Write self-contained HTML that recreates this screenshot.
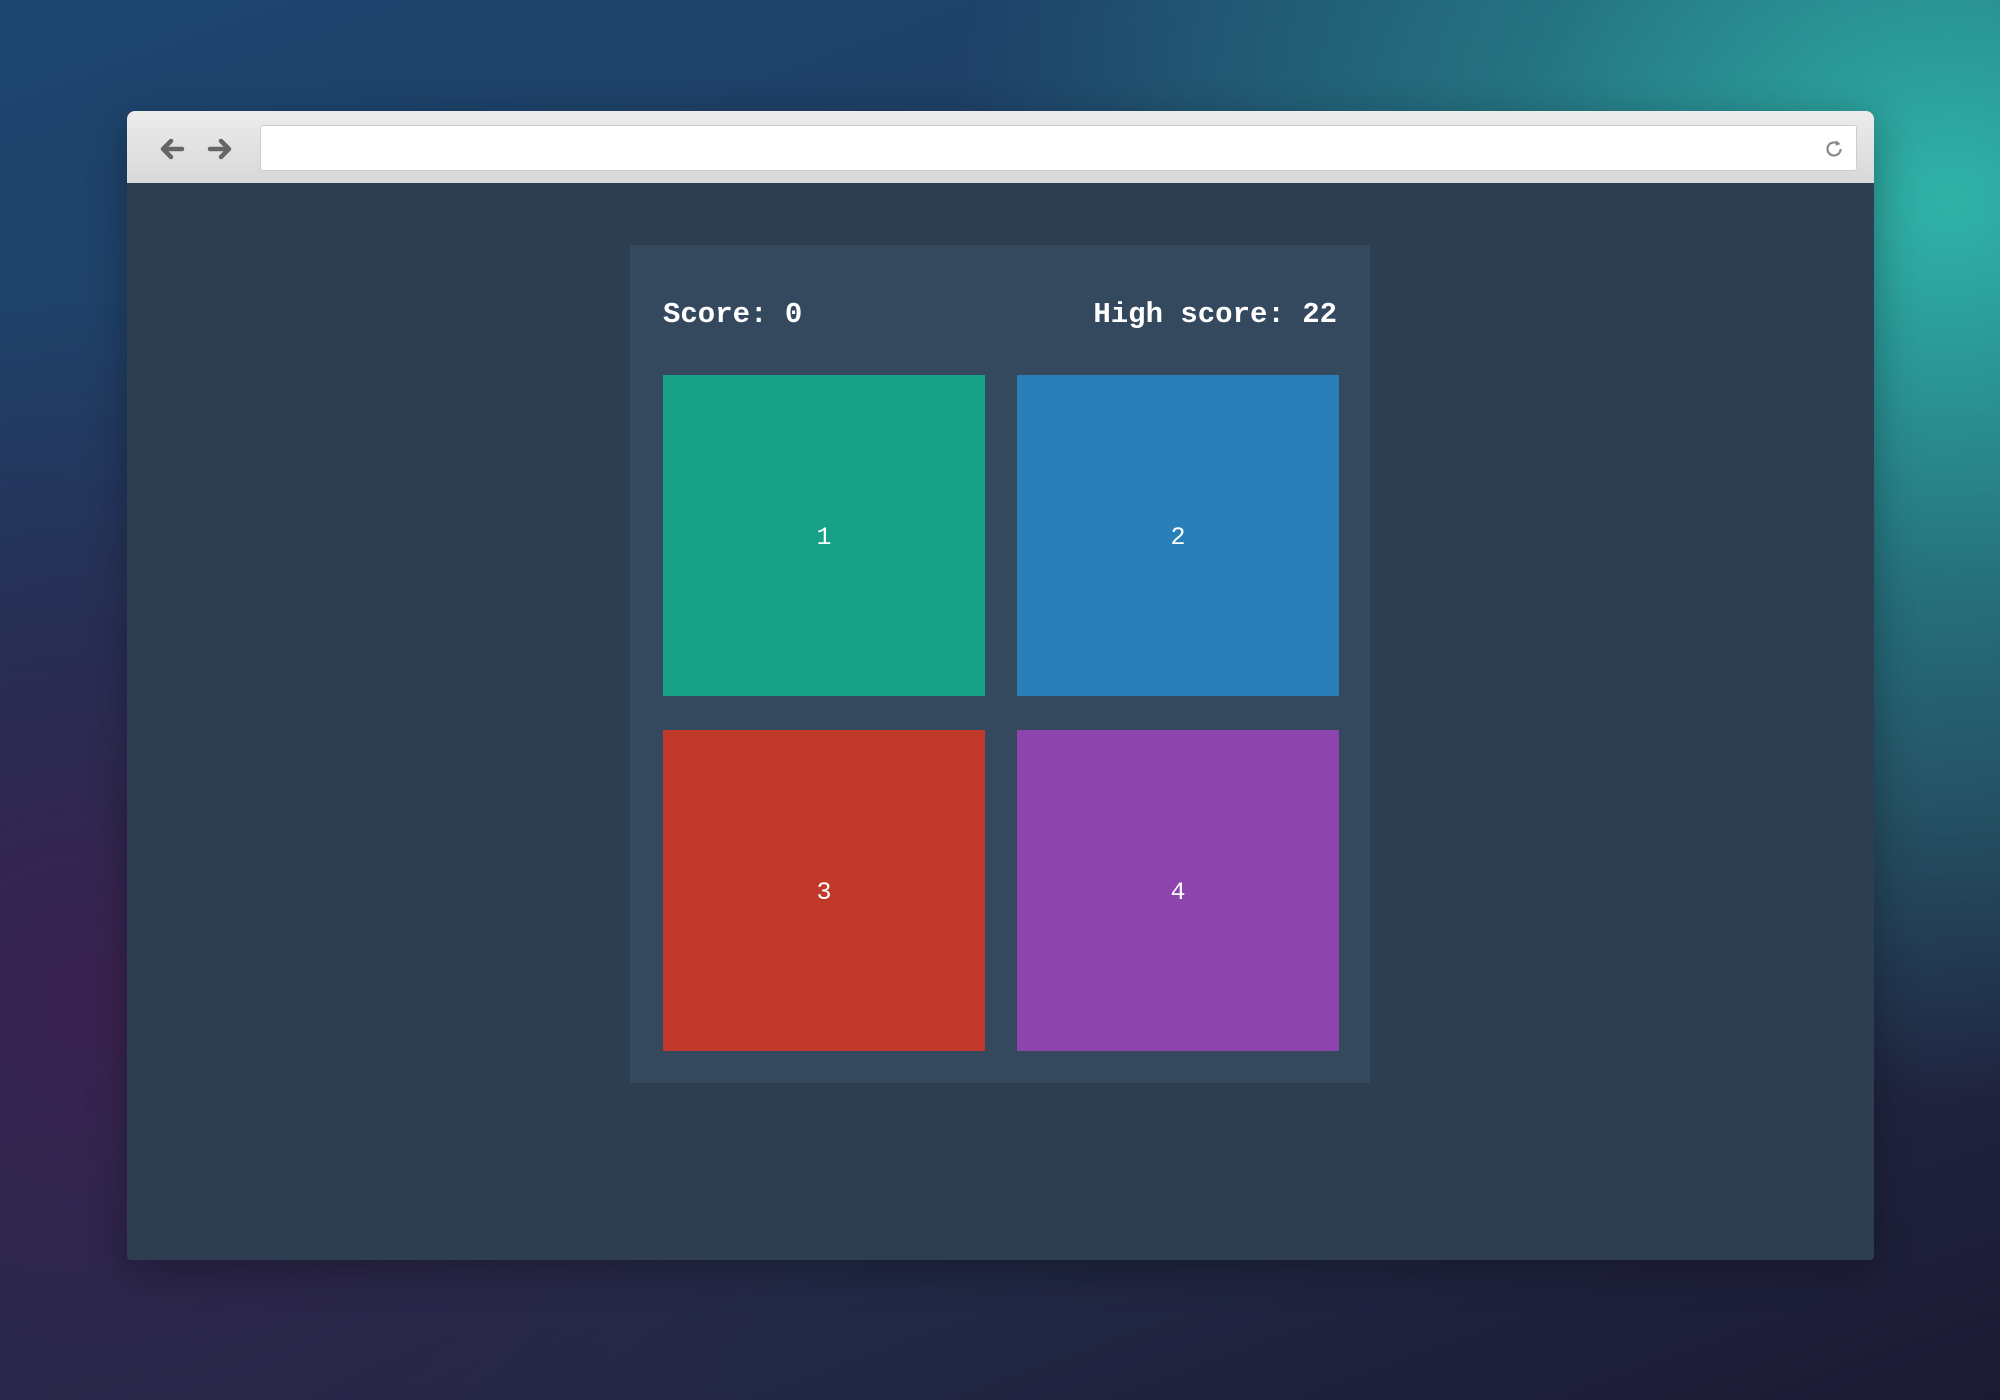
<!DOCTYPE html>
<html><head><style>
html,body{margin:0;padding:0;width:2000px;height:1400px;overflow:hidden}
body{position:relative;background:
radial-gradient(ellipse 1000px 900px at 1950px 200px,#2fb3a8 0%,rgba(40,150,150,.6) 45%,rgba(0,0,0,0) 100%),
radial-gradient(ellipse 800px 700px at 100px 1000px,#3a2150 0%,rgba(50,30,70,.5) 50%,rgba(0,0,0,0) 100%),
linear-gradient(160deg,#1e4670 0%,#1f3b5e 40%,#232c4a 70%,#1c1a33 100%);}
.win{position:absolute;left:127px;top:111px;width:1747px;height:1149px;background:#2e3e51;border-radius:8px 8px 4px 4px;overflow:hidden;box-shadow:0 10px 40px rgba(0,0,0,.3)}
.bar{position:absolute;left:0;top:0;width:100%;height:72px;background:linear-gradient(#ececec,#d8d8d8)}
.url{position:absolute;left:133px;top:14px;width:1597px;height:46px;background:#fff;border:1px solid #ccc;border-radius:3px;box-sizing:border-box}
.panel{position:absolute;left:503px;top:134px;width:740px;height:838px;background:#35495e}
.sc{position:absolute;top:53px;color:#fff;font:bold 29px "Liberation Mono",monospace}
.t{position:absolute;width:322px;height:321px;color:#fff;font:25px "Liberation Mono",monospace;display:flex;align-items:center;justify-content:center;padding-top:4px;box-sizing:border-box}
</style></head><body>
<div class="win">
<div class="bar">
<svg style="position:absolute;left:30px;top:24px" width="90" height="28" viewBox="0 0 90 28"><g fill="none" stroke="#666" stroke-width="4.5" stroke-linecap="round" stroke-linejoin="round"><path d="M25 14H6M14 6L6 14L14 22"/><path d="M53 14H72M64 6L72 14L64 22"/></g></svg>
<div class="url"><svg style="position:absolute;right:10px;top:11px" width="24" height="24" viewBox="0 0 22 22"><path d="M17 11a6 6 0 1 1-2-4.5" fill="none" stroke="#888" stroke-width="2"/><path d="M13 3l4 3.5-4.5 1.5z" fill="#888"/></svg></div>
</div>
<div class="panel">
<div class="sc" style="left:33px">Score: 0</div>
<div class="sc" style="right:33px">High score: 22</div>
<div class="t" style="left:33px;top:130px;background:#16a085">1</div>
<div class="t" style="left:387px;top:130px;background:#2980b9">2</div>
<div class="t" style="left:33px;top:485px;background:#c0392b">3</div>
<div class="t" style="left:387px;top:485px;background:#8e44ad">4</div>
</div>
</div>
</body></html>
